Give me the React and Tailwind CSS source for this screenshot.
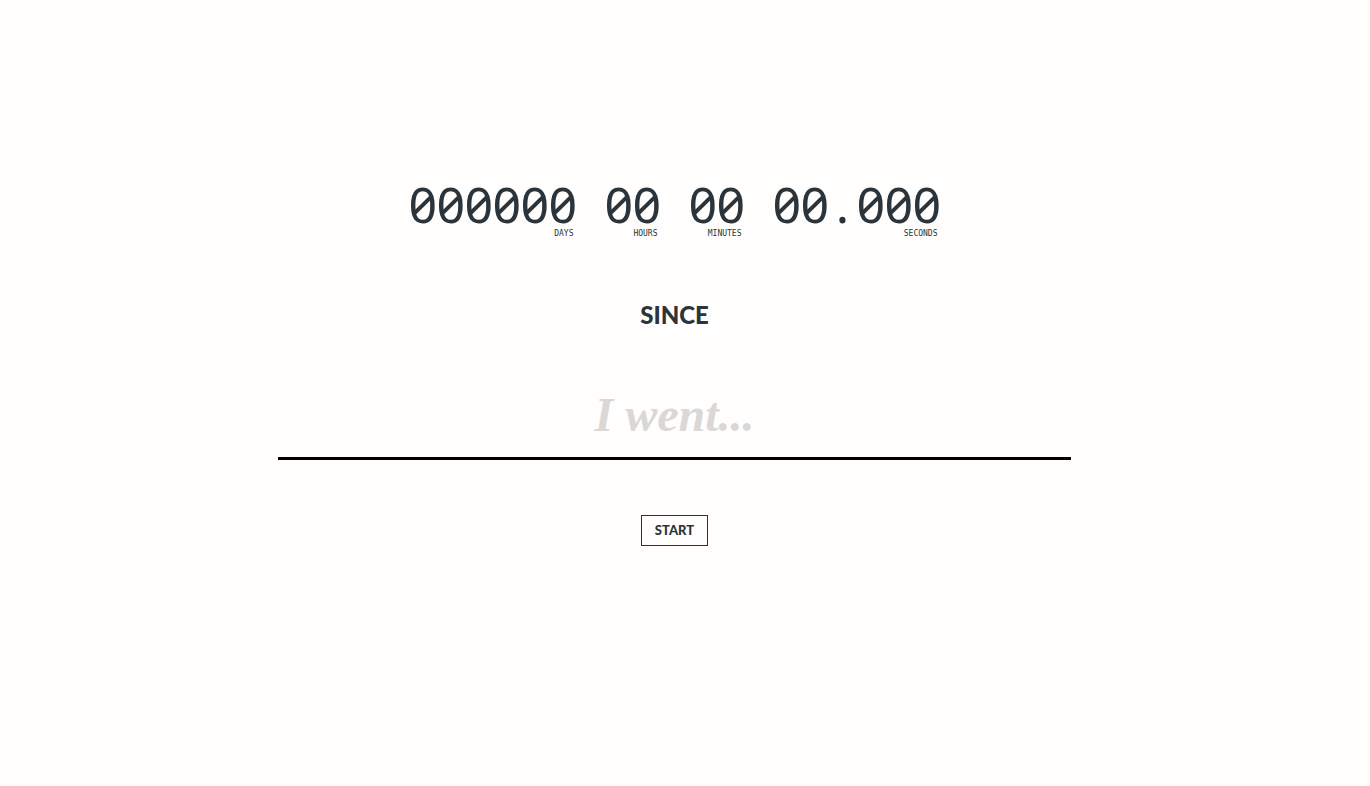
import { useState } from "react";

const units = [
  { id: "days", label: "DAYS", value: "000000" },
  { id: "hours", label: "HOURS", value: "00" },
  { id: "minutes", label: "MINUTES", value: "00" },
  { id: "seconds", label: "SECONDS", value: "00.000" },
];

function Unit({ label, value }) {
  return (
    <div className="flex flex-col items-end">
      <div className="flex font-['Noto_Sans',sans-serif] text-[50px] leading-[48px] font-normal [font-feature-settings:'zero']">
        {value.split("").map((char, i) => (
          <span key={i} className="w-7 text-center">
            {char}
          </span>
        ))}
      </div>
      <div className="pr-[3px] font-['DejaVu_Sans_Mono',monospace] text-[8px] leading-3">
        {label}
      </div>
    </div>
  );
}

export default function App() {
  const [activity, setActivity] = useState("");

  return (
    <main className="min-h-screen bg-[#fffefc] pt-[180px] pr-[21px] text-[#2a343a]">
      <form
        onSubmit={(e) => e.preventDefault()}
        className="mx-auto flex w-full max-w-[793px] flex-col items-center"
      >
        {/* Counter */}
        <div className="flex gap-7">
          {units.map((unit) => (
            <Unit key={unit.id} label={unit.label} value={unit.value} />
          ))}
        </div>

        <label
          htmlFor="activity"
          className="mt-[59px] font-['Lato',sans-serif] text-2xl font-black"
        >
          SINCE
        </label>

        {/* Activity */}
        <input
          id="activity"
          type="text"
          value={activity}
          onChange={(e) => setActivity(e.target.value)}
          placeholder="I went..."
          className="mt-12 h-[81px] w-full border-b-3 border-black bg-transparent pb-2 text-center font-['Liberation_Serif',serif] text-[48px] font-bold italic outline-none placeholder:text-[#d9d8d6]"
        />

        <button
          type="submit"
          className="mt-[55px] cursor-pointer border border-[#2a343a] px-[13px] py-1.5 font-['Lato',sans-serif] text-[13px] leading-[17px] font-black"
        >
          START
        </button>
      </form>
    </main>
  );
}
